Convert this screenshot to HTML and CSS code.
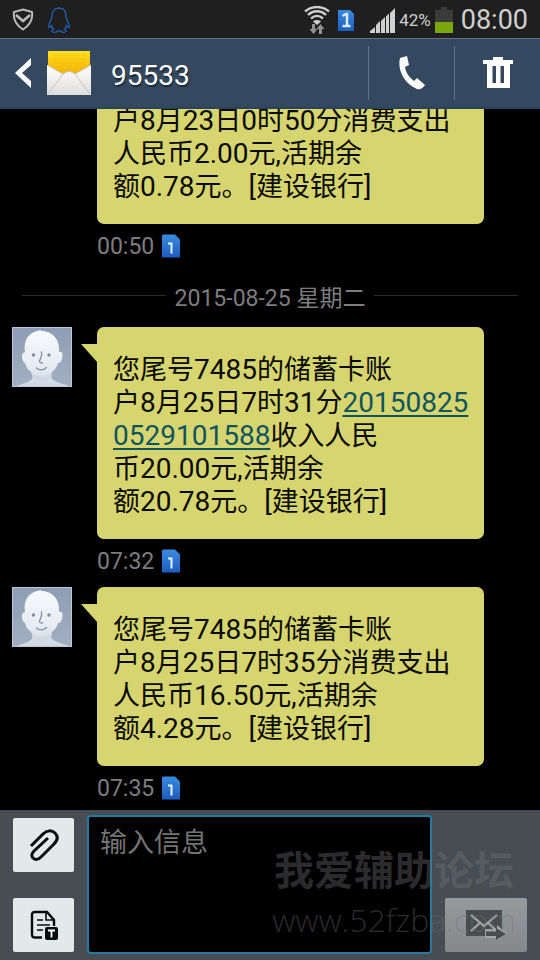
FILE: index.html
```html
<!DOCTYPE html>
<html lang="zh-CN">
<head>
<meta charset="utf-8">
<meta name="viewport" content="width=device-width, initial-scale=1">
<title>95533</title>
<link rel="stylesheet" href="styles.css">
</head>
<body>
<svg class="defs" aria-hidden="true">
  <defs>
    <linearGradient id="simFill" x1="0" y1="0" x2="0" y2="1"><stop offset="0" stop-color="#3a8be0"/><stop offset="1" stop-color="#1c5cc0"/></linearGradient>
    <linearGradient id="faceBg" x1="0" y1="0" x2="0" y2="1"><stop offset="0" stop-color="#8d9db5"/><stop offset="1" stop-color="#a3afc2"/></linearGradient>
    <linearGradient id="faceFill" x1="0" y1="0" x2="0" y2="1"><stop offset="0" stop-color="#f8fafc"/><stop offset=".65" stop-color="#e6ebf2"/><stop offset="1" stop-color="#ccd5e1"/></linearGradient>
    <linearGradient id="flap" x1="0" y1="0" x2="0" y2="1"><stop offset="0" stop-color="#ffe020"/><stop offset="1" stop-color="#f0ac00"/></linearGradient>
    <linearGradient id="paper" x1="0" y1="0" x2="0" y2="1"><stop offset="0" stop-color="#ffffff"/><stop offset="1" stop-color="#dedddb"/></linearGradient>
    <symbol id="sim" viewBox="0 0 18 24">
      <path d="M1 .5h12l5 5V23.500H0V1.500z" fill="url(#simFill)"/>
      <path d="M6 9.500h3.500v10" fill="none" stroke="#e8f1ff" stroke-width="2"/>
    </symbol>
    <symbol id="face" viewBox="0 0 60 60">
      <rect width="60" height="60" fill="url(#faceBg)"/>
      <path d="M3 60c4-3 14-4 17-8 1-2 0-5-1-7-3-2-5-5-6-9-3-1-4-8-2-10l2-1C11 13 17 6 25 4l4-1v1c12 0 19 9 18 21 4-1 4 3 3 7-1 3-2 4-4 4-1 4-3 7-6 9-1 3-1 5 0 7 4 4 15 5 18 8z" fill="url(#faceFill)"/>
      <path d="M20 46c6 5 13 5 18 0l1 5c-6 4-13 4-19 0z" fill="#c3cddb" opacity=".35"/>
      <circle cx="21.500" cy="28" r="1.700" fill="#7d8ea4"/><circle cx="37" cy="28" r="1.700" fill="#7d8ea4"/>
      <path d="M29.500 25c1 4-1 6-2 9 0 2 1 2 3 2M24.500 41c3 2.500 7 2.500 10-.5" fill="none" stroke="#7d8ea4" stroke-width="1.300" stroke-linecap="round"/>
      <path d="M.5 .5h59v59H.5z" fill="none" stroke="#bfc8d4"/>
    </symbol>
  </defs>
</svg>

<div class="screen">
  <div class="status">
    <svg width="22" height="24" viewBox="0 0 22 24"><path d="M11 1.500L20 4c1 7-2 13-9 17.500C4 17 1 11 2 4z" fill="none" stroke="#bbb" stroke-width="2"/><path d="M4 7l7 6 7-6" fill="none" stroke="#bbb" stroke-width="2.600"/></svg>
    <svg class="qq" width="24" height="28" viewBox="0 0 24 28"><path d="M12 2C7 2 5 6 5 10c0 2-.5 3-1.500 5C2 18 1.500 21 2 21.500c.7.5 2-1.500 2.500-2 .5 2 1 3 2 4-1.500 1-2 2-1 2.500 2 .7 4.500 0 6.500-1.500 2 1.500 4.500 2.200 6.500 1.500 1-.5.5-1.500-1-2.500 1-1 1.500-2 2-4 .5.5 1.800 2.500 2.500 2 .5-.5 0-3.500-1.500-6.500-1-2-1.500-3-1.500-5 0-4-2-8-7-8z" fill="none" stroke="#1d63b4" stroke-width="1.300"/></svg>
    <div class="spacer"></div>
    <svg width="28" height="28" viewBox="0 0 28 28" fill="none"><path d="M2 5.500C9-.5 19-.5 26 5.500M5 9c5-5 13-5 18 0M8 12.500c4-3.500 8-3.500 12 0" stroke="#cfcfcf" stroke-width="2.400"/><path d="M10 15.500c2-2 6-2 8 0L14 19z" fill="#cfcfcf"/><path d="M9 18h3v5h2.500l-4 5-4-5H9zM16 28v-5h-2.500l4-5 4 5H19v5z" fill="#929292"/></svg>
    <svg class="status-sim" width="16" height="21" viewBox="0 0 16 21"><path d="M0 0h12l4 4v17H0z" fill="url(#simFill)"/><path d="M4.500 6L8 4h1v11M4.500 16h8" fill="none" stroke="#dce9ff" stroke-width="2.500"/></svg>
    <svg width="25" height="25" viewBox="0 0 25 25" fill="#cfcfcf"><path d="M0 25v-2l5-4v6zM6 25v-8l4-4v12zM11 25V13l4-4v16zM16 25V8.500l3-3V25zM20 25V5l5-5v25z"/></svg>
    <span class="percent">42%</span>
    <svg width="18" height="26" viewBox="0 0 18 26"><path d="M6 0h6v3h6v12H0V3h6z" fill="#3b3b3b"/><path d="M0 15h18v11H0z" fill="#79a70f"/></svg>
    <span class="clock">08:00</span>
  </div>

  <header class="bar">
    <button class="back" aria-label="返回"><svg width="18" height="32" viewBox="0 0 18 32"><path d="M17 1v7L8 16l9 8v7L1 16z" fill="#fff"/></svg></button>
    <svg class="mail" width="46" height="46" viewBox="0 0 46 46"><path d="M2 1h42v25H2z" fill="url(#flap)"/><path d="M6 5h34M6 9h34M8 13h30" stroke="#e9b400" opacity=".4"/><path d="M1 15l16 9q6-5 12 0l16-9v30H1z" fill="url(#paper)"/><path d="M2 44l15-20q6-5 12 0l15 20M1 15l16 9M45 15l-16 9" fill="none" stroke="#c9c6c2"/></svg>
    <h1>95533</h1>
    <button class="action" aria-label="拨打"><svg width="28" height="36" viewBox="0 0 28 36"><path d="M2 3L9 1l2 9-4 2c1 6 4 10 9 14l3-3 8 7c-2 3-5 5-8 4C7 29-1 16 2 3z" fill="#fff"/></svg></button>
    <button class="action" aria-label="删除"><svg width="30" height="32" viewBox="0 0 30 32"><path fill-rule="evenodd" d="M10 0h10v3h10v4h-3v24H4V7H0V3h10zM9.500 9v17H13V9zM17.500 9v17H21V9z" fill="#fff"/></svg></button>
  </header>

  <main class="log">
    <article class="message continued">
      <div class="body">
        <p class="bubble">户<b>8</b>月<b>23</b>日<b>0</b>时<b>50</b>分消费支出<br>人民币<b>2.00</b>元,活期余<br>额<b>0.78</b>元。<b>[</b>建设银行<b>]</b></p>
        <div class="meta"><time>00:50</time><svg class="sim"><use href="#sim"/></svg></div>
      </div>
    </article>
    <div class="day"><span>2015-08-25 星期二</span></div>
    <article class="message">
      <svg class="avatar" aria-hidden="true"><use href="#face"/></svg>
      <div class="body">
        <p class="bubble">您尾号<b>7485</b>的储蓄卡账<br>户<b>8</b>月<b>25</b>日<b>7</b>时<b>31</b>分<a href="tel:201508250529101588">20150825<br>0529101588</a>收入人民<br>币<b>20.00</b>元,活期余<br>额<b>20.78</b>元。<b>[</b>建设银行<b>]</b></p>
        <div class="meta"><time>07:32</time><svg class="sim"><use href="#sim"/></svg></div>
      </div>
    </article>
    <article class="message">
      <svg class="avatar" aria-hidden="true"><use href="#face"/></svg>
      <div class="body">
        <p class="bubble">您尾号<b>7485</b>的储蓄卡账<br>户<b>8</b>月<b>25</b>日<b>7</b>时<b>35</b>分消费支出<br>人民币<b>16.50</b>元,活期余<br>额<b>4.28</b>元。<b>[</b>建设银行<b>]</b></p>
        <div class="meta"><time>07:35</time><svg class="sim"><use href="#sim"/></svg></div>
      </div>
    </article>
  </main>

  <form class="composer">
    <div class="tools">
      <button type="button" aria-label="附件"><svg width="32" height="34" viewBox="0 0 32 34"><path d="M3 18L15 6c4-4 9-4 12-1s3 7-1 11L13 29c-3 3-6 3-8 1s-1-5 1-7l14-13" fill="none" stroke="#080c0f" stroke-width="3"/></svg></button>
      <button type="button" aria-label="模板"><svg width="28" height="30" viewBox="0 0 28 30"><path d="M12 27.500H5q-3 0-3-3V5q0-3 3-3h12l7 8v6" fill="none" stroke="#080c0f" stroke-width="2.400"/><path d="M16 2v8h8" fill="none" stroke="#080c0f" stroke-width="1.600"/><path d="M7 10h6M7 15h13M7 20h6" stroke="#080c0f" stroke-width="1.600"/><rect x="15" y="17" width="13" height="13" rx="2" fill="#080c0f"/><path d="M18 20.500h7M21.500 20.500v7" stroke="#fff" stroke-width="1.800"/></svg></button>
    </div>
    <textarea aria-label="输入信息" placeholder="输入信息"></textarea>
    <div class="sending">
      <button type="submit" aria-label="发送"><svg width="42" height="32" viewBox="0 0 42 32"><path d="M1 1h36v26H1z" fill="#494d50"/><path d="M6 6l13 11L32 6M6 22l10-9M32 22l-10-9" fill="none" stroke="#a2a6a9" stroke-width="2.200"/><path d="M20 20h12v-4l10 8.500-10 7V29H20z" fill="#a2a6a9"/><path d="M21 22.500h10V19l10 6-10 6v-4H21z" fill="#494d50"/></svg></button>
    </div>
    <div class="watermark"><strong>我爱辅助论坛</strong><span>www.52fzba.com</span></div>
  </form>
</div>
</body>
</html>
```
FILE: styles.css
```css
* { box-sizing: border-box; }

body {
  margin: 0;
  background: #000;
  color: #0b0b05;
  font-family: Roboto, "Noto Sans CJK SC", sans-serif;
}

button {
  display: flex;
  align-items: center;
  justify-content: center;
  padding: 0;
  border: 0;
  background: none;
}

.defs { position: absolute; width: 0; height: 0; }

.screen {
  display: flex;
  flex-direction: column;
  height: 100vh;
}

.status {
  display: flex;
  flex: none;
  align-items: center;
  height: 38px;
  padding: 2px 12px 0;
  background: #1f1f1f;
  color: #cfcfcf;
}
.qq { margin-left: 13px; }
.spacer { flex: 1; }
.status-sim { margin: 0 16px 0 7px; }
.percent { margin: 0 4px; font-size: 17px; }
.clock { margin-left: 8px; font-size: 27px; }

.bar {
  display: flex;
  flex: none;
  align-items: center;
  height: 71px;
  border-top: 1px solid #5f7284;
  border-bottom: 2px solid #2c435a;
  background: #34495f;
  color: #fff;
}
.back { width: 46px; height: 60px; }
.bar h1 {
  flex: 1;
  margin: 0 0 0 19px;
  padding-top: 4px;
  font-size: 28px;
  font-weight: 400;
  text-shadow: 1px 2px 1px #1c2937;
}
.action {
  width: 86px;
  height: 54px;
  border-left: 1px solid #5f7387;
}

.log {
  display: flex;
  flex: 1;
  flex-direction: column;
  justify-content: flex-end;
  min-height: 0;
  overflow: hidden;
}
.message {
  display: flex;
  flex: none;
  gap: 25px;
  padding: 0 56px 0 12px;
}
.message + .message { margin-top: 4px; }
.continued { padding-left: 97px; }
.avatar { flex: none; width: 60px; height: 60px; }
.body { flex: 1; }
.bubble {
  position: relative;
  margin: 0;
  padding: 27px 0 20px 16px;
  border-radius: 7px;
  background: #d6d56f;
  font-size: 27px;
  line-height: 33px;
  white-space: nowrap;
}
.bubble::before {
  content: "";
  position: absolute;
  top: 17px;
  left: -16px;
  width: 17px;
  height: 19px;
  background: #d6d56f;
  clip-path: polygon(0 0, 100% 0, 100% 100%);
}
.continued .bubble::before { display: none; }
.bubble b, .bubble a {
  font-size: 28px;
  font-weight: 400;
  line-height: 1;
}
.bubble a {
  color: #0f5560;
  text-decoration-thickness: 2px;
  text-underline-offset: 3px;
}
.meta {
  display: flex;
  align-items: center;
  gap: 8px;
  height: 44px;
  color: #7d7d7d;
  font-size: 23px;
}
.sim { width: 18px; height: 24px; }

.day {
  display: flex;
  flex: none;
  align-items: center;
  gap: 9px;
  height: 59px;
  padding: 0 22px 4px;
  color: #7d7d7d;
  font-size: 23px;
}
.day::before, .day::after {
  content: "";
  flex: 1;
  height: 1px;
  background: #2b2b2b;
}

.composer {
  position: relative;
  display: flex;
  flex: none;
  gap: 13px;
  height: 150px;
  padding: 5px 13px 6px;
  background: #464d53;
}
.tools, .sending {
  display: flex;
  flex-direction: column;
  justify-content: space-between;
  padding: 3px 0 2px;
}
.sending { justify-content: flex-end; }
.tools button {
  width: 61px;
  height: 54px;
  border-radius: 2px;
  background: #e3e8ea;
}
.sending button {
  width: 82px;
  height: 54px;
  border-radius: 2px;
  background: linear-gradient(#979a9c, #85888a);
}
textarea {
  flex: 1;
  min-width: 0;
  padding: 10px 11px;
  border: 2px solid #26799f;
  border-radius: 4px;
  outline: 0;
  background: #000;
  color: #ddd;
  font: 27px/32px Roboto, "Noto Sans CJK SC", sans-serif;
  resize: none;
}
textarea::placeholder { color: #747474; }

.watermark {
  position: absolute;
  right: 24px;
  bottom: 16px;
  display: flex;
  flex-direction: column;
  align-items: center;
  color: rgba(115, 115, 120, .38);
  pointer-events: none;
}
.watermark strong {
  font-size: 40px;
  line-height: 48px;
}
.watermark span {
  font: 300 32px/48px "Open Sans", sans-serif;
}
```
